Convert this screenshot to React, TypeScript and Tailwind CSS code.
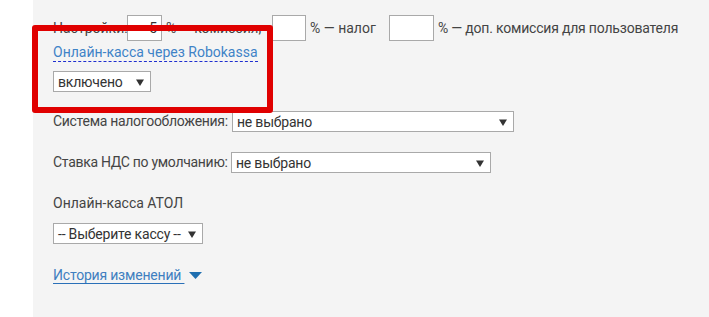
import React from "react";

function Sel({ text, w }: { text: string; w: string }) {
  return (
    <div className={`relative h-[21px] ${w} shrink-0 border border-[#a9a9a9] bg-white flex items-center pl-[4px] text-[14px] tracking-[-0.2px] text-[#333] leading-none whitespace-nowrap`}>
      <span>{text}</span>
      <svg className="absolute right-[6px] top-[7px]" width="8" height="8" viewBox="0 0 8 8">
        <path d="M0 0.5 H8 L4 7 Z" fill="#333" />
      </svg>
    </div>
  );
}

function Box({ v, w }: { v?: string; w: string }) {
  return (
    <div className={`h-[26px] ${w} shrink-0 border border-[#a9a9a9] bg-white flex items-center justify-end pr-[4px] text-[14px] text-[#333]`}>
      {v}
    </div>
  );
}

export default function App() {
  return (
    <div className="relative w-[709px] h-[317px] bg-white overflow-hidden whitespace-nowrap" style={{ fontFamily: 'Roboto, "Liberation Sans", sans-serif' }}>
      <div className="absolute left-[33px] top-0 right-0 bottom-0 bg-[#f4f4f4]" />
      <div className="relative ml-[33px] pl-[20px] pt-[15px] text-[14px] text-[#444]">
        <div className="flex items-center h-[26px]">
          <span className="w-[74px] shrink-0">Настройки:</span>
          <Box v="5" w="w-[35px]" />
          <span className="ml-[4px] w-[106px] shrink-0">% — комиссия,</span>
          <Box w="w-[34px]" />
          <span className="ml-[4px] w-[79px] shrink-0">% — налог</span>
          <Box w="w-[45px]" />
          <span className="ml-[4px] tracking-[-0.2px]">% — доп. комиссия для пользователя</span>
        </div>
        <div className="mt-[1px] h-[22px] flex items-start">
          <span className="text-[#3f83c7] border-b border-dashed border-[#1f2fd0] leading-[17px] pt-[2px]">Онлайн-касса через Robokassa</span>
        </div>
        <div className="mt-[7px]"><Sel text="включено" w="w-[98px]" /></div>
        <div className="mt-[19px] flex items-center">
          <span className="w-[179px] shrink-0 tracking-[-0.3px]">Система налогообложения:</span>
          <Sel text="не выбрано" w="w-[282px]" />
        </div>
        <div className="mt-[20px] flex items-center">
          <span className="w-[178px] shrink-0 tracking-[-0.3px]">Ставка НДС по умолчанию:</span>
          <Sel text="не выбрано" w="w-[260px]" />
        </div>
        <div className="mt-[20px] leading-[20px]">Онлайн-касса АТОЛ</div>
        <div className="mt-[10px]"><Sel text="-- Выберите кассу --" w="w-[150px]" /></div>
        <div className="mt-[21px] flex items-center">
          <span className="text-[#3f7fc0] underline decoration-[#2a70b8] underline-offset-[3px] tracking-[-0.2px]">История изменений&nbsp;</span>
          <svg className="ml-[5px]" width="13" height="7" viewBox="0 0 13 7">
            <path d="M0 0 H13 L6.5 7 Z" fill="#1f6fb0" />
          </svg>
        </div>
      </div>
      <div className="absolute left-[32px] top-[25px] w-[241px] h-[88px] border-[6px] border-[#e00000] rounded-[3px]" />
    </div>
  );
}
